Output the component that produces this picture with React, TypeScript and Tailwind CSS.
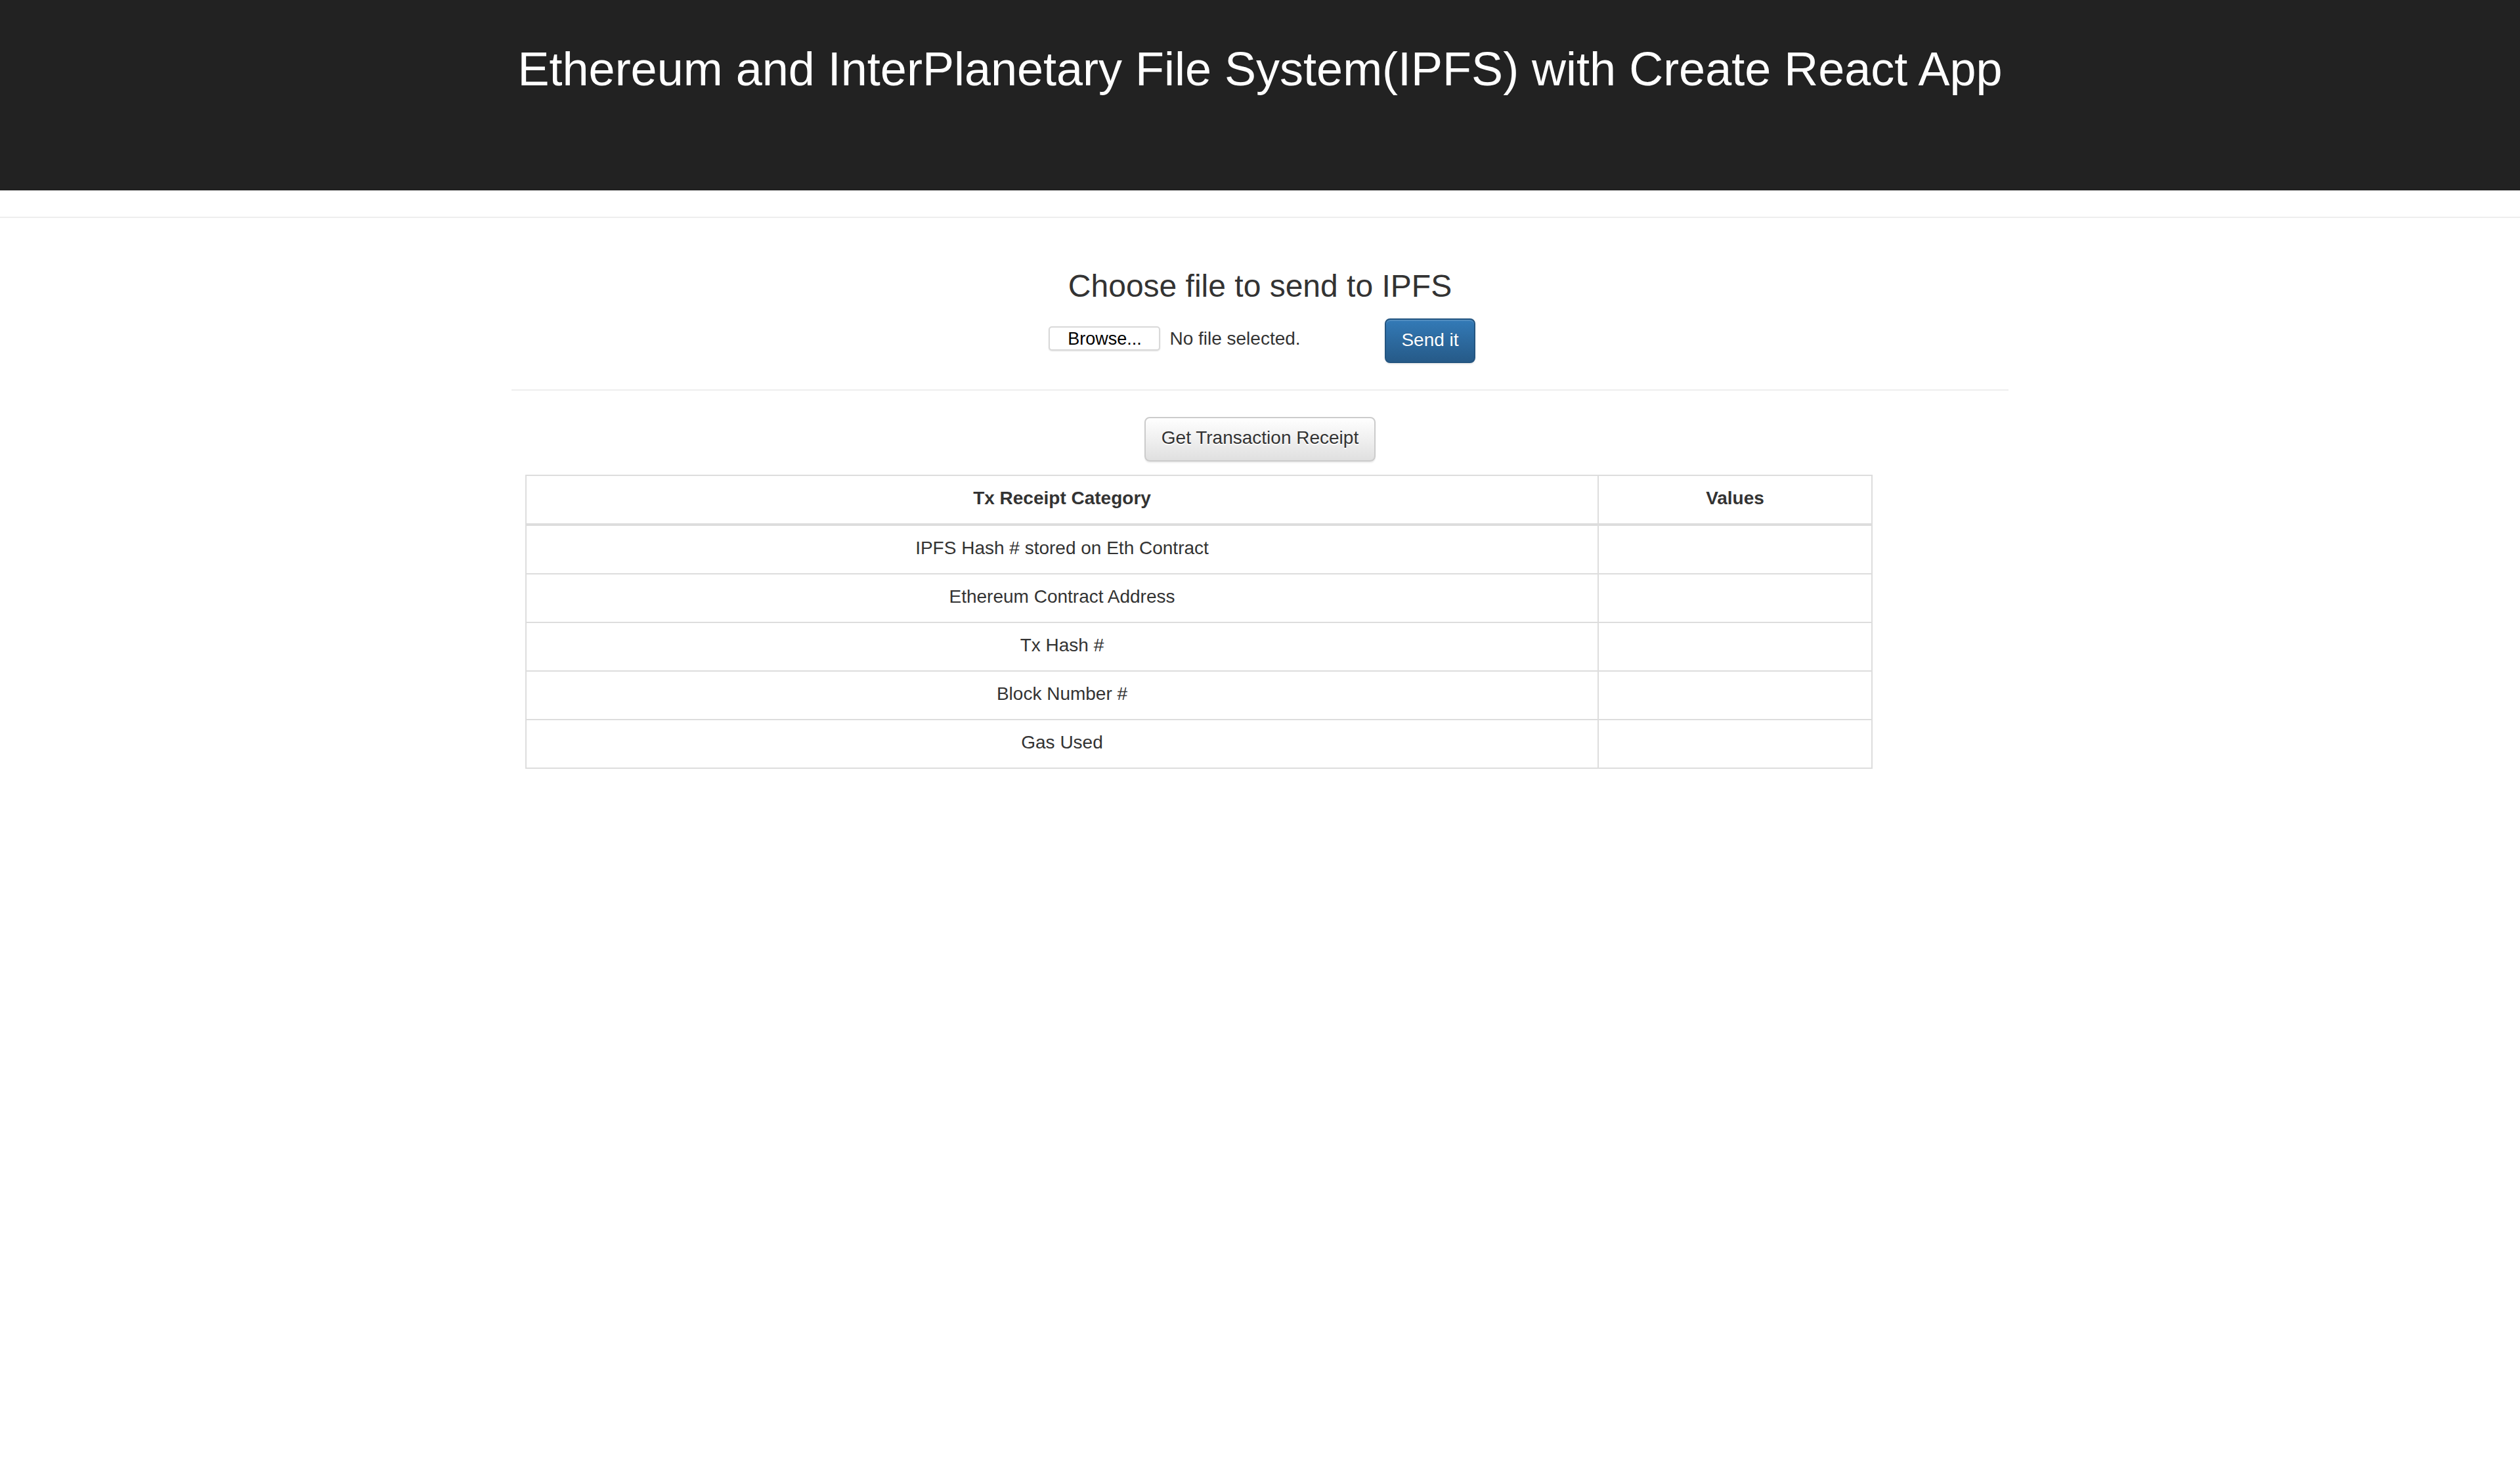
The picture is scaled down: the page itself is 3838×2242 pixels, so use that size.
const rows = [
  "IPFS Hash # stored on Eth Contract",
  "Ethereum Contract Address",
  "Tx Hash #",
  "Block Number #",
  "Gas Used",
];

export default function App() {
  return (
    <div className="min-h-screen bg-white font-['Liberation_Sans',Arial,sans-serif] text-[28px] leading-[40px] text-[#333333]">
      {/* top bar */}
      <div className="border-b-2 border-[#eeeeee] pb-[40px]">
        <header className="h-[290px] bg-[#222222] pt-[66px]">
          <h1 className="text-center text-[72px] leading-[79px] font-normal text-white">
            Ethereum and InterPlanetary File System(IPFS) with Create React App
          </h1>
        </header>
      </div>

      <main className="mx-auto w-[2340px] px-[30px]">
        <h3 className="mt-[77px] text-center text-[48px] leading-[53px] font-normal text-[#333333]">
          Choose file to send to IPFS
        </h3>

        <form
          className="mt-[23px] flex items-start justify-center pl-[6px]"
          onSubmit={(e) => e.preventDefault()}
        >
          <div className="mt-[12px] flex w-[505px] items-center">
            <span className="flex h-[37px] w-[170px] items-center justify-center rounded-[5px] border-2 border-[#d9d9d9] bg-white text-[27px] leading-[32px] text-black shadow-[0_1px_2px_rgba(0,0,0,0.12)]">
              Browse...
            </span>
            <span className="ml-[14px] text-[28px] leading-[32px] text-[#333333]">No file selected.</span>
          </div>
          <button
            type="submit"
            className="ml-[7px] rounded-[8px] border-2 border-[#245580] bg-gradient-to-b from-[#337ab7] to-[#265a88] px-[23px] pt-[11px] pb-[13px] text-[28px] leading-[40px] text-white [text-shadow:0_-1px_0_rgba(0,0,0,0.2)] shadow-[inset_0_2px_0_rgba(255,255,255,0.15),0_2px_2px_rgba(0,0,0,0.075)]"
          >
            Send it
          </button>
        </form>

        <hr className="my-[40px] border-0 border-t-2 border-[#eeeeee]" />

        <div className="flex justify-center">
          <button
            type="button"
            className="rounded-[8px] border-2 border-[#cccccc] bg-gradient-to-b from-white to-[#e0e0e0] px-[24px] pt-[10px] pb-[14px] text-[28px] leading-[40px] text-[#333333] [text-shadow:0_2px_0_#ffffff] shadow-[inset_0_2px_0_rgba(255,255,255,0.15),0_2px_2px_rgba(0,0,0,0.075)]"
          >
            Get Transaction Receipt
          </button>
        </div>

        <table className="ml-[21px] mt-[20px] w-[2052px] border-collapse border-2 border-[#dddddd]">
          <thead>
            <tr>
              <th className="w-[1633px] border-2 border-b-4 border-[#dddddd] px-[16px] pt-[14px] pb-[18px] text-center font-bold">
                Tx Receipt Category
              </th>
              <th className="border-2 border-b-4 border-[#dddddd] px-[16px] pt-[14px] pb-[18px] text-center font-bold">
                Values
              </th>
            </tr>
          </thead>
          <tbody>
            {rows.map((label) => (
              <tr key={label}>
                <td className="border-2 border-[#dddddd] px-[16px] pt-[14px] pb-[18px] text-center">{label}</td>
                <td className="border-2 border-[#dddddd] px-[16px] pt-[14px] pb-[18px] text-center"></td>
              </tr>
            ))}
          </tbody>
        </table>
      </main>
    </div>
  );
}
